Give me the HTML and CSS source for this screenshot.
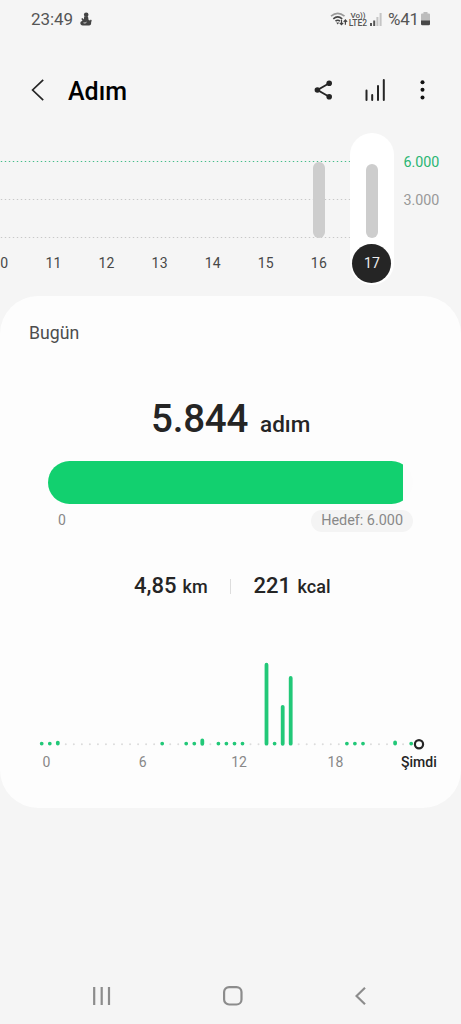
FILE: index.html
```html
<!DOCTYPE html>
<html lang="tr">
<head>
<meta charset="utf-8">
<title>Adım</title>
<link rel="stylesheet" href="styles.css">
</head>
<body>
<div class="status">
  <span class="clock">23:49</span>
  <svg class="notif" width="12" height="14" viewBox="0 0 12 14"><circle cx="6.200" cy="2.800" r="2.300"/><path d="M4.200 4.600h3.800l.6 3.400 1.400.6.8-1 .9.700-.6 2.500c.3 1.800-.8 2.700-2 2.700H2.800C1 13.500 0 12.300.4 10.600c.3-1 1.200-1.500 2.100-1.500L1.300 6.800l1.100-.7 1.400 1.400z"/><path d="M3.500 10.800q1.700.8 3-.6" class="cut"/></svg>
  <span class="spacer"></span>
  <svg class="wifi" width="18" height="14" viewBox="0 0 18 14"><g fill="none" stroke-width="1.600"><path d="M1 4.200Q7.700-1.600 14.500 4.200" stroke="#999"/><path d="M3.300 6.800Q7.700 3 12.200 6.800" stroke="#444"/><path d="M5.500 9.200Q7.700 7.400 10 9.200" stroke="#444"/></g><path d="M6.200 10.600h3l-1.500 2z" fill="#444"/><path d="M11.500 7.800v4.800M9.700 10.800l1.800 1.900 1.700-1.900M15.400 12.800V8M13.700 9.800l1.700-1.900 1.700 1.900" fill="none" stroke="#444" stroke-width="1.200"/></svg>
  <span class="volte"><span class="vo">Vo))</span><span>LTE2</span></span>
  <svg class="signal" width="12" height="13" viewBox="0 0 12 13"><path d="M0 10h2v3H0zM3.200 7.500h2V13h-2z" fill="#555"/><path d="M6.400 4h2v9h-2zM9.600 0h2v13h-2z" fill="#c4c4c4"/></svg>
  <span class="percent">%41</span>
  <svg class="battery" width="9" height="14" viewBox="0 0 9 14"><path d="M2.500 0h4v1.500H8Q9 1.500 9 2.500V9H0V2.500Q0 1.500 1 1.500h1.500z" fill="#bcbcbc"/><path d="M0 8.500h9V12q0 1.300-1.300 1.300H1.300Q0 13.300 0 12z" fill="#484848"/></svg>
</div>

<header class="header">
  <svg class="back" width="14" height="24" viewBox="0 0 14 24"><path d="M12.200 1.800 1.600 12l10.600 10.200"/></svg>
  <h1>Adım</h1>
  <svg class="share" width="19" height="20" viewBox="0 0 19 20"><path d="M15.200 3.200 3.500 10l11.700 6.800" fill="none" stroke="#252525" stroke-width="1.900"/><g fill="#252525"><circle cx="15.200" cy="3.200" r="2.800"/><circle cx="3.400" cy="10" r="2.800"/><circle cx="15.200" cy="16.800" r="2.800"/></g></svg>
  <svg class="stats" width="21" height="22" viewBox="0 0 21 22"><path d="M1.500 11.500V21M7.200 16v5M13 7v14M18.800 1v20"/></svg>
  <svg class="more" width="5" height="20" viewBox="0 0 5 20"><circle cx="2.500" cy="2.200" r="2"/><circle cx="2.500" cy="9.800" r="2"/><circle cx="2.500" cy="17.500" r="2"/></svg>
</header>

<section class="week">
  <svg class="gridlines" width="353" height="110" viewBox="0 0 353 110"><path d="M.8 28.500H353" stroke="#45bd8a"/><path d="M.8 66.500H353M.8 104.500H353" stroke="#c8c8c8"/></svg>
  <div class="days">
    <div class="day"><span>10</span></div>
    <div class="day"><span>11</span></div>
    <div class="day"><span>12</span></div>
    <div class="day"><span>13</span></div>
    <div class="day"><span>14</span></div>
    <div class="day"><span>15</span></div>
    <div class="day"><i class="bar full"></i><span>16</span></div>
    <div class="day selected"><i class="bar"></i><span>17</span></div>
  </div>
  <div class="scale"><span class="goal">6.000</span><span>3.000</span></div>
</section>

<main class="card">
  <h2>Bugün</h2>
  <p class="steps"><b>5.844</b><span>adım</span></p>
  <div class="track"><div class="fill" style="width:355px"></div></div>
  <div class="range"><span>0</span><span class="target">Hedef: 6.000</span></div>
  <div class="totals">
    <p><b>4,85</b><span>km</span></p>
    <i class="divider"></i>
    <p><b>221</b><span>kcal</span></p>
  </div>
  <svg class="hours" width="461" height="92" viewBox="0 0 461 92">
    <path class="empty" d="M65.800 84.200H412"/>
    <g class="mask"><path d="M158 84.200h8M182 84.200h24M214 84.200h32M262 84.200h32M343 84.200h24M391 84.200h8M407 84.200h8"/></g>
    <path class="dots" d="M41.700 83.600h0M49.800 83.600h0M57.800 82.600v1M162.200 83.600h0M186.200 83.600h0M194.300 83.600h0M218.400 83.600h0M226.400 83.600h0M234.500 83.600h0M242.500 83.600h0M274.600 83.600h0M346.900 83.600h0M354.900 83.600h0M363 83.600h0M395.100 82.500v1M411.200 83.600h0"/>
    <path class="bars" d="M202.300 80.500v3.300M266.500 4.700v79M282.700 46.800v37M290.700 18v65.700"/>
    <circle cx="419" cy="84.200" r="4.100"/>
  </svg>
  <div class="axis"><span>0</span><span>6</span><span>12</span><span>18</span><span class="now">Şimdi</span></div>
</main>

<nav class="nav">
  <svg width="18" height="18" viewBox="0 0 18 18"><path d="M1.200 0v18M8.700 0v18M16 0v18"/></svg>
  <svg width="20" height="20" viewBox="0 0 20 20"><rect x="1.100" y="1.100" width="17.400" height="17.400" rx="5"/></svg>
  <svg width="11" height="18" viewBox="0 0 11 18"><path d="M10 .8 1.500 9l8.500 8.200"/></svg>
</nav>
</body>
</html>
```

FILE: styles.css
```css
* { box-sizing: border-box; margin: 0; padding: 0; }
body {
  width: 461px;
  height: 1024px;
  overflow: hidden;
  display: flex;
  flex-direction: column;
  background: #f5f5f5;
  color: #252525;
  font-family: Roboto, "Liberation Sans", sans-serif;
}
svg { display: block; flex: none; }

.status { height: 40px; display: flex; align-items: center; padding: 0 31px 2px 31px; color: #555; }
.clock { font-size: 17px; line-height: 20px; width: 49px; letter-spacing: -.1px; }
.notif { fill: #444; }
.notif .cut { fill: none; stroke: #f5f5f5; stroke-width: .8; }
.spacer { flex: 1; }
.wifi { margin-right: 1px; }
.volte { display: flex; flex-direction: column; align-items: center; width: 18px; font-size: 8.500px; line-height: 8px; font-weight: 500; }
.volte .vo { font-size: 8px; line-height: 7px; }
.signal { margin: 0 6px 0 3px; }
.percent { font-size: 17px; line-height: 20px; width: 33px; white-space: nowrap; letter-spacing: -.2px; }

.header { height: 93px; display: flex; align-items: center; padding: 7px 36px 0 31px; }
.back { fill: none; stroke: #252525; stroke-width: 1.700; }
.header h1 { flex: 1; margin: 3px 0 0 23px; font-size: 25px; line-height: 30px; font-weight: 500; color: #000; }
.stats { margin: 0 34px 0 32px; fill: none; stroke: #252525; stroke-width: 2; stroke-linecap: round; }
.more { fill: #111; }

.week { height: 163px; position: relative; display: flex; overflow: hidden; }
.gridlines { position: absolute; left: 0; top: 0; stroke-width: 1.200; stroke-dasharray: 1.400 2.600; }
.days { position: relative; flex: none; display: flex; height: 152px; margin-left: -26.200px; }
.day {
  width: 53.100px;
  display: flex;
  flex-direction: column;
  align-items: center;
  justify-content: flex-end;
  font-size: 14px;
  line-height: 39px;
  letter-spacing: .2px;
  color: #484848;
  padding-bottom: 2.500px;
}
.bar { width: 12px; height: 74px; border-radius: 6px; background: #cdcdcd; margin-bottom: 6px; }
.bar.full { height: 76px; margin-bottom: 5.500px; }
.day.selected { width: 44px; margin-left: 4.500px; border-radius: 22px; background: #fff; }
.selected span { width: 39px; height: 39px; border-radius: 50%; background: #252525; color: #eee; text-align: center; }
.scale { margin: 20px 0 0 9.500px; font-size: 14.300px; line-height: 18px; color: #999; display: flex; flex-direction: column; gap: 20px; }
.goal { color: #2bb673; }

.card { height: 512px; border-radius: 38px; background: #fdfdfd; display: flex; flex-direction: column; }
.card h2 { margin: 26px 0 0 29px; font-size: 17.700px; line-height: 22px; font-weight: 400; color: #4d4d4d; }
.steps { height: 48px; margin: 51px 0 18px 151px; display: flex; align-items: baseline; }
.steps b { font-size: 38.500px; line-height: 48px; font-weight: 500; width: 109px; letter-spacing: -.2px; }
.steps span { font-size: 22.500px; font-weight: 500; }
.track { width: 365px; height: 43px; margin-left: 48px; border-radius: 21.500px; overflow: hidden; background: #fcfcfc; }
.fill { height: 100%; background: #12d06f; }
.range { display: flex; justify-content: space-between; margin: 6px 48px 0 58px; height: 22px; font-size: 14px; line-height: 21px; color: #888; }
.target { height: 22px; padding: 0 10px; border-radius: 11px; background: #f4f4f4; font-size: 14.400px; }
.totals { display: flex; margin: 41px 0 0 134px; height: 27px; align-items: center; }
.totals p { display: flex; align-items: baseline; line-height: 26px; }
.totals b { font-size: 22px; font-weight: 500; width: 48.500px; }
.totals span { font-size: 18px; font-weight: 500; }
.totals p:last-child b { width: 44px; }
.divider { width: 1px; height: 15px; margin: 0 23px 0 22px; background: #ddd; }

.hours { margin-top: 60px; fill: none; stroke-linecap: round; }
.empty { stroke: #dcdcdc; stroke-width: 2; stroke-dasharray: 0 8.030; }
.mask { stroke: #fdfdfd; stroke-width: 3; stroke-linecap: butt; }
.dots, .bars { stroke: #22c878; stroke-width: 3.800; }
.hours circle { stroke: #252525; stroke-width: 2.200; fill: #fdfdfd; }
.axis { display: flex; margin: 1px 0 0 30.500px; font-size: 14px; line-height: 18px; color: #888; }
.axis span { width: 32px; margin-right: 64.300px; text-align: center; }
.axis span:nth-child(4) { margin-right: 42.500px; }
.axis .now { width: 50px; margin: 0; font-weight: 500; color: #252525; }

.nav { flex: none; margin-top: 178px; height: 20px; display: flex; justify-content: space-between; align-items: center; padding: 0 95px 0 93px; fill: none; stroke: #8c8c8c; stroke-width: 2.200; }
```
